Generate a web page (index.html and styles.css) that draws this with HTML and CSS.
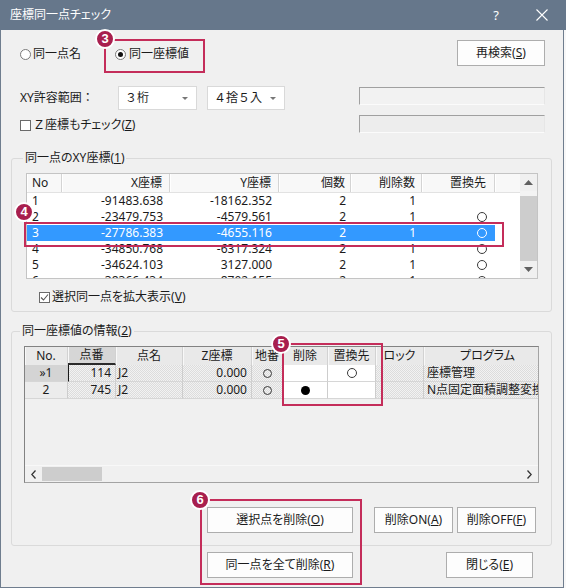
FILE: index.html
```html
<!DOCTYPE html>
<html lang="ja">
<head>
<meta charset="utf-8">
<title>座標同一点チェック</title>
<link rel="stylesheet" href="styles.css">
</head>
<body>
<div class="window">
  <div class="titlebar">
    <span class="title">座標同一点チェック</span>
    <span class="tb-help">?</span>
    <span class="tb-close"><svg width="12" height="12" viewBox="0 0 12 12"><path d="M0.5 0.5L11.5 11.5M11.5 0.5L0.5 11.5" stroke="#fff" stroke-width="1.1"/></svg></span>
  </div>
  <div class="content">
    <div class="row row1">
      <span class="radio"><span class="rb"></span>同一点名</span>
      <span class="radio radio2"><span class="rb on"></span>同一座標値</span>
      <div class="btn btn-research">再検索(<u>S</u>)</div>
    </div>
    <div class="row row2">
      <span class="lbl">XY許容範囲：</span>
      <div class="combo c1"><span>３桁</span><i class="dd"></i></div>
      <div class="combo c2"><span>４捨５入</span><i class="dd"></i></div>
      <div class="field f1"></div>
    </div>
    <div class="row row3">
      <span class="check"><span class="cb"></span><span class="fw">Ｚ</span>座標もチェック(<u>Z</u>)</span>
      <div class="field f2"></div>
    </div>

    <fieldset class="group g1">
      <legend>同一点のXY座標(<u>1</u>)</legend>
      <div class="t1">
        <div class="t1-main">
          <div class="t1-head">
            <div class="c w-no left">No</div>
            <div class="c w-x">X座標</div>
            <div class="c w-y">Y座標</div>
            <div class="c w-ko">個数</div>
            <div class="c w-del">削除数</div>
            <div class="c w-rep">置換先</div>
            <div class="c w-rest"></div>
          </div>
          <div class="t1-row">
            <div class="c w-no left">1</div><div class="c w-x">-91483.638</div><div class="c w-y">-18162.352</div><div class="c w-ko">2</div><div class="c w-del">1</div><div class="c w-rep"></div><div class="c w-rest"></div>
          </div>
          <div class="t1-row">
            <div class="c w-no left">2</div><div class="c w-x">-23479.753</div><div class="c w-y">-4579.561</div><div class="c w-ko">2</div><div class="c w-del">1</div><div class="c w-rep"><span class="circ"></span></div><div class="c w-rest"></div>
          </div>
          <div class="t1-row sel">
            <div class="c w-no left">3</div><div class="c w-x">-27786.383</div><div class="c w-y">-4655.116</div><div class="c w-ko">2</div><div class="c w-del">1</div><div class="c w-rep"><span class="circ"></span></div><div class="c w-rest"></div>
          </div>
          <div class="t1-row">
            <div class="c w-no left">4</div><div class="c w-x">-34850.768</div><div class="c w-y">-6317.324</div><div class="c w-ko">2</div><div class="c w-del">1</div><div class="c w-rep"><span class="circ"></span></div><div class="c w-rest"></div>
          </div>
          <div class="t1-row">
            <div class="c w-no left">5</div><div class="c w-x">-34624.103</div><div class="c w-y">3127.000</div><div class="c w-ko">2</div><div class="c w-del">1</div><div class="c w-rep"><span class="circ"></span></div><div class="c w-rest"></div>
          </div>
          <div class="t1-row">
            <div class="c w-no left">6</div><div class="c w-x">-38366.434</div><div class="c w-y">8702.155</div><div class="c w-ko">2</div><div class="c w-del">1</div><div class="c w-rep"><span class="circ"></span></div><div class="c w-rest"></div>
          </div>
        </div>
        <div class="vscroll">
          <div class="sb-btn"><svg width="9" height="5" viewBox="0 0 9 5"><path d="M0 5L4.5 0L9 5Z" fill="#606060"/></svg></div>
          <div class="sb-track"><div class="sb-thumb"></div></div>
          <div class="sb-btn"><svg width="9" height="5" viewBox="0 0 9 5"><path d="M0 0L4.5 5L9 0Z" fill="#606060"/></svg></div>
        </div>
      </div>
      <div class="check check2"><span class="cb"><svg width="9" height="9" viewBox="0 0 9 9"><path d="M1 4.5L3.5 7L8 1.5" stroke="#555" stroke-width="1.1" fill="none"/></svg></span>選択同一点を拡大表示(<u>V</u>)</div>
    </fieldset>

    <fieldset class="group g2">
      <legend>同一座標値の情報(<u>2</u>)</legend>
      <div class="t2">
        <div class="t2-body">
          <div class="t2-head">
            <div class="h w2-no">No.</div>
            <div class="h w2-pt cur">点番</div>
            <div class="h w2-nm">点名</div>
            <div class="h w2-z">Z座標</div>
            <div class="h w2-ch">地番</div>
            <div class="h w2-del">削除</div>
            <div class="h w2-rep">置換先</div>
            <div class="h w2-lock">ロック</div>
            <div class="h w2-prog">プログラム</div>
          </div>
          <div class="t2-row">
            <div class="d w2-no rowhdr cur-row">»1</div>
            <div class="d w2-pt ro right focus">114</div>
            <div class="d w2-nm ro">J2</div>
            <div class="d w2-z ro right">0.000</div>
            <div class="d w2-ch ro center"><span class="circ small"></span></div>
            <div class="d w2-del center"></div>
            <div class="d w2-rep center"><span class="circ"></span></div>
            <div class="d w2-lock ro"></div>
            <div class="d w2-prog ro">座標管理</div>
          </div>
          <div class="t2-row">
            <div class="d w2-no rowhdr">2</div>
            <div class="d w2-pt ro right">745</div>
            <div class="d w2-nm ro">J2</div>
            <div class="d w2-z ro right">0.000</div>
            <div class="d w2-ch ro center"><span class="circ small"></span></div>
            <div class="d w2-del center"><span class="dot"></span></div>
            <div class="d w2-rep center"></div>
            <div class="d w2-lock ro"></div>
            <div class="d w2-prog ro">N点固定面積調整変換</div>
          </div>
        </div>
        <div class="hscroll">
          <div class="sb-btn"><svg width="5" height="9" viewBox="0 0 5 9"><path d="M4.5 0.5L0.8 4.5L4.5 8.5" stroke="#333" stroke-width="1.3" fill="none"/></svg></div>
          <div class="hs-track"><div class="hs-thumb"></div></div>
          <div class="sb-btn"><svg width="5" height="9" viewBox="0 0 5 9"><path d="M0.5 0.5L4.2 4.5L0.5 8.5" stroke="#333" stroke-width="1.3" fill="none"/></svg></div>
        </div>
      </div>
      <div class="btnrow br1">
        <div class="btn b-delsel">選択点を削除(<u>O</u>)</div>
        <div class="btn b-on">削除ON(<u>A</u>)</div>
        <div class="btn b-off">削除OFF(<u>F</u>)</div>
      </div>
    </fieldset>

    <div class="btnrow br2">
      <div class="btn b-delall">同一点を全て削除(<u>R</u>)</div>
      <div class="btn b-close">閉じる(<u>E</u>)</div>
    </div>
  </div>

  <div class="hl hl3"></div><div class="badge b3">3</div>
  <div class="hl hl4"></div><div class="badge b4">4</div>
  <div class="hl hl5"></div><div class="badge b5">5</div>
  <div class="hl hl6"></div><div class="badge b6">6</div>
</div>
</body>
</html>
```

FILE: styles.css
```css
* { box-sizing: border-box; }
html, body { margin: 0; padding: 0; background: #f7f7f7; }
body {
  font-family: "Noto Sans", "Noto Sans CJK JP", sans-serif;
  font-size: 12px;
  color: #1b1b1b;
  font-feature-settings: "palt";
}
u { text-decoration: underline; text-underline-offset: 1px; }

.window {
  position: relative;
  width: 564px;
  height: 588px;
  background: #f0f0f0;
  border: 1px solid #6f7d8e;
  border-top: none;
  display: flex;
  flex-direction: column;
}

.titlebar {
  height: 30px;
  flex: none;
  margin: 0 -3px 0 -1px;
  background: #66778b;
  color: #fff;
  display: flex;
  align-items: center;
  padding-left: 10px;
}
.title { flex: 1; font-size: 12px; line-height: 16px; }
.tb-help { font-size: 13px; margin-right: 37px; line-height: 16px; }
.tb-close { width: 12px; height: 12px; margin-right: 18px; display: flex; }

.content {
  flex: 1;
  display: flex;
  flex-direction: column;
  padding: 9px 0 0 10px;
}

.row { display: flex; align-items: center; }
.row1 { height: 30px; }
.row2 { height: 24px; margin-top: 17px; }
.row3 { height: 20px; margin-top: 5px; }

.radio { display: flex; align-items: center; line-height: 16px; }
.radio:first-child { margin-left: 9px; }
.radio2 { margin-left: 34px; }
.rb {
  width: 11px; height: 11px;
  border: 1px solid #7a7a7a;
  border-radius: 50%;
  background: #fff;
  margin-right: 2px;
  display: flex; align-items: center; justify-content: center;
}
.rb.on::after {
  content: "";
  width: 5px; height: 5px;
  border-radius: 50%;
  background: #111;
}
.radio2 .rb { margin-right: 3px; }

.btn {
  display: flex; align-items: center; justify-content: center;
  height: 26px;
  background: #fdfdfd;
  border: 1px solid #adadad;
  line-height: 16px;
}
.btn-research { margin-left: auto; margin-right: 18px; width: 88px; align-self: flex-start; margin-top: 1px; }

.lbl { width: 98px; margin-left: 9px; line-height: 16px; font-feature-settings: normal; }
.combo {
  height: 24px;
  background: #fff;
  border: 1px solid #d9d9d9;
  display: flex; align-items: center;
  padding-left: 6px;
  line-height: 16px;
  font-feature-settings: normal;
}
.combo span { flex: 1; }
.c1 { width: 79px; }
.c2 { width: 78px; margin-left: 10px; }
.dd {
  width: 0; height: 0;
  border-left: 3px solid transparent;
  border-right: 3px solid transparent;
  border-top: 3px solid #777;
  margin-right: 8px;
}
.field {
  width: 186px; height: 18px;
  background: #f2f2f2;
  border-top: 1px solid #a0a0a0;
  border-left: 1px solid #a0a0a0;
  border-right: 1px solid #e6e6e6;
  border-bottom: 1px solid #fbfbfb;
  align-self: flex-start;
}
.f1 { margin-left: 74px; margin-top: 1px; }
.f2 { margin-left: auto; margin-right: 18px; background: #ededed; }

.check { display: flex; align-items: center; line-height: 16px; }
.row3 .check { margin-left: 9px; }
.fw { font-feature-settings: normal; }
.cb {
  width: 11px; height: 11px;
  border: 1px solid #6a6a6a;
  background: #fff;
  margin-right: 2px;
  display: flex; align-items: center; justify-content: center;
}

/* group boxes */
.group {
  margin: 0;
  width: 541px;
  border: 1px solid #dadada;
  border-radius: 3px;
  min-width: 0;
}
.group legend {
  padding: 0 2px;
  line-height: 16px;
  font-size: 12px;
}
.g1 { margin-top: 15px; padding: 7px 12px 6px 14px; }
.g1 legend { margin-left: -3px; }
.g2 { margin-top: 11px; padding: 7px 0 12px 12px; }
.g2 legend { margin-left: -4px; }

/* table 1 */
.t1 {
  width: 512px;
  height: 106px;
  border: 1px solid #c4c4c4;
  display: flex;
  background: #fff;
}
.t1-main { flex: 1; overflow: hidden; }
.t1-head {
  display: flex;
  height: 19px;
  background: #f8f8f8;
  border-bottom: 1px solid #e2e2e2;
}
.t1-head .c {
  border-right: 1px solid #d4d4d4;
  box-shadow: inset 1px 0 #fff;
}
.t1-head .w-rest { border-right: none; }
.t1-row { display: flex; height: 16px; }
.c {
  flex: none;
  display: flex; align-items: center; justify-content: flex-end;
  line-height: 16px;
  white-space: nowrap;
  padding-right: 7px;
}
.c.left { justify-content: flex-start; padding-left: 5px; padding-right: 0; }
.w-no { width: 35px; }
.w-x { width: 108px; }
.w-y { width: 109px; }
.w-ko { width: 72px; padding-right: 5px; }
.w-del { width: 71px; padding-right: 6px; }
.w-rep { width: 73px; padding-right: 8px; }
.w-rest { flex: 1; padding: 0; }
.t1-row.sel .c:not(.w-rest) { background: #3399ff; color: #fff; }
.circ {
  display: inline-block;
  width: 10px; height: 10px;
  border: 1px solid #3a3a3a;
  border-radius: 50%;
}
.circ.small { width: 9px; height: 9px; }
.sel .circ { border-color: #fff; }
.dot {
  display: inline-block;
  width: 9px; height: 9px;
  border-radius: 50%;
  background: #000;
}

.vscroll {
  width: 17px;
  flex: none;
  display: flex;
  flex-direction: column;
  background: #f0f0f0;
}
.sb-btn {
  width: 17px; height: 17px;
  flex: none;
  display: flex; align-items: center; justify-content: center;
  background: #f0f0f0;
}
.sb-track { flex: 1; padding-top: 5px; background: #f3f3f3; }
.sb-thumb { height: 65px; background: #cdcdcd; }

.check2 { margin-top: 10px; height: 16px; padding-left: 13px; }

/* table 2 */
.t2 {
  width: 515px;
  height: 137px;
  border-top: 1px solid #828282;
  border-left: 1px solid #828282;
  border-right: 1px solid #a3a3a3;
  border-bottom: 1px solid #a3a3a3;
  background: #f0f0f0;
  display: flex;
  flex-direction: column;
  overflow: hidden;
}
.t2-body { flex: 1; overflow: hidden; }
.t2-head, .t2-row { display: flex; }
.t2-head { height: 18px; }
.t2-row { height: 17px; }
.h, .d {
  flex: none;
  display: flex; align-items: center;
  line-height: 16px;
  white-space: nowrap;
  overflow: hidden;
}
.h {
  justify-content: center;
  background: #e9e9e9;
  border-right: 1px solid #d2d2d2;
  box-shadow: inset 1px 0 #f8f8f8;
}
.h.cur { background: #d6d6d6; border-bottom: 2px solid #2a2a2a; }
.d {
  border-right: 1px solid #cdcdcd;
  border-bottom: 1px solid #d6d6d6;
  background: #fff;
  padding: 0 2px;
}
.d.ro {
  background: repeating-conic-gradient(#dcdcdc 0 25%, #f2f2f2 0 50%) 0 0 / 2px 2px;
}
.d.right { justify-content: flex-end; padding-right: 4px; }
.d.center { justify-content: center; }
.d.rowhdr { justify-content: center; background: #ececec; }
.d.cur-row { background: #d4d4d4; }
.d.focus { border-left: 1px solid #1a1a1a; }
.w2-no { width: 43px; }
.w2-pt { width: 48px; }
.w2-nm { width: 67px; }
.w2-z { width: 69px; }
.w2-ch { width: 31px; }
.w2-del { width: 45px; }
.w2-rep { width: 48px; }
.w2-lock { width: 48px; }
.w2-prog { width: 128px; }
.d.w2-prog { padding-left: 3px; }

.hscroll {
  height: 17px;
  flex: none;
  display: flex;
  background: #f0f0f0;
  border-top: 1px solid #f8f8f8;
}
.hs-track { flex: 1; display: flex; align-items: stretch; padding: 1px 0; }
.hs-thumb { width: 60px; background: #cdcdcd; }

/* buttons */
.btnrow { display: flex; }
.br1 { margin-top: 24px; margin-left: 183px; }
.b-delsel { width: 146px; }
.b-on { width: 79px; margin-left: 21px; }
.b-off { width: 79px; margin-left: 4px; }
.br2 { margin-top: 6px; margin-left: 196px; }
.b-delall { width: 146px; }
.b-close { width: 87px; margin-left: 93px; }

/* annotations */
.hl {
  position: absolute;
  border: 2.5px solid #c42d5a;
}
.hl3 { left: 103px; top: 39px; width: 101px; height: 34px; }
.hl4 { left: 23px; top: 222px; width: 480px; height: 25px; }
.hl5 { left: 281px; top: 343px; width: 101px; height: 63px; }
.hl6 { left: 199px; top: 499px; width: 162px; height: 86px; }
.badge {
  position: absolute;
  width: 20px; height: 20px;
  border-radius: 50%;
  background: #a81f4e;
  border: 2px solid #fff;
  color: #fff;
  font-family: "Liberation Sans", "Noto Sans", sans-serif;
  font-weight: bold;
  font-size: 13px;
  line-height: 16px;
  text-align: center;
}
.b3 { left: 94px; top: 29px; }
.b4 { left: 13px; top: 202px; }
.b5 { left: 270px; top: 334px; }
.b6 { left: 189px; top: 490px; }
```
